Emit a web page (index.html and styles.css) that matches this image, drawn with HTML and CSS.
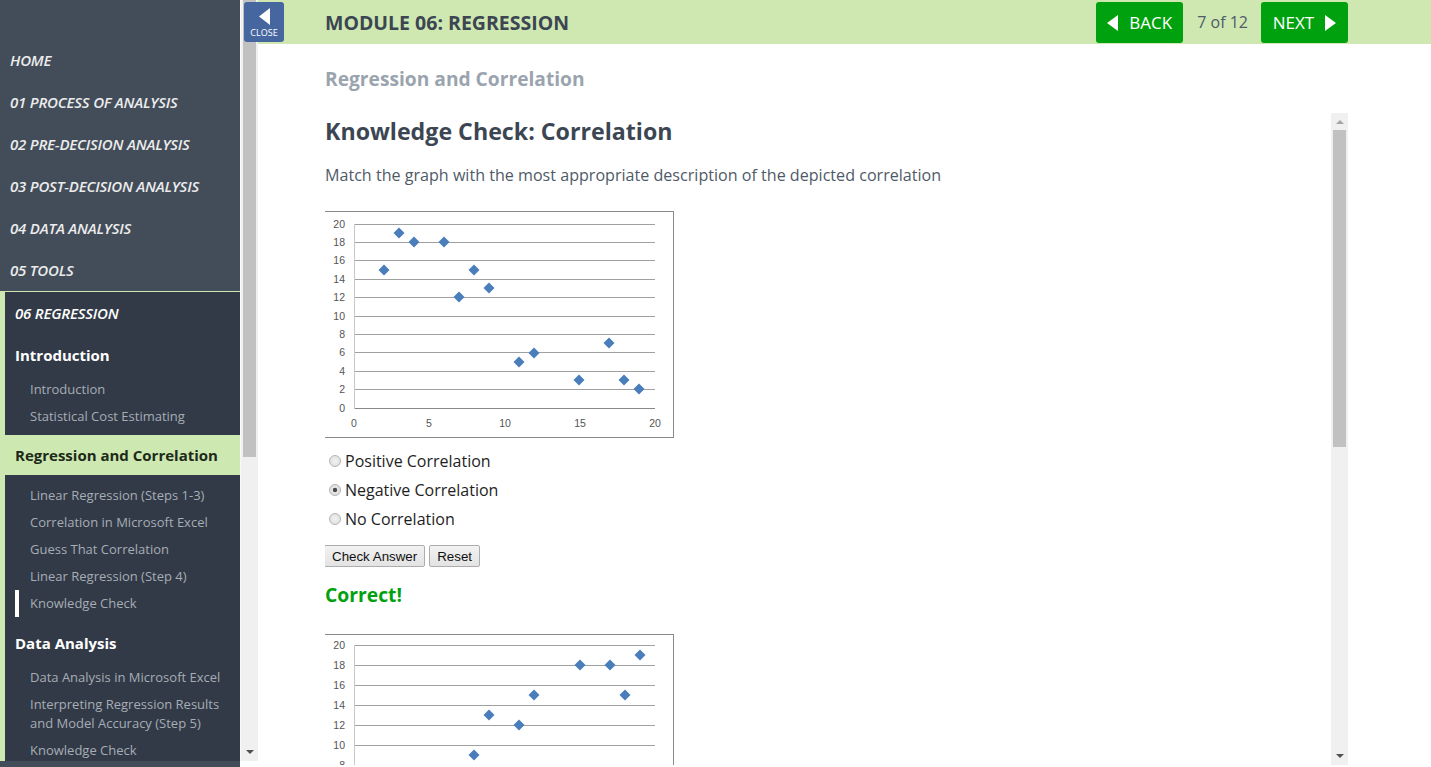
FILE: index.html
```html
<!DOCTYPE html>
<html lang="en">
<head>
<meta charset="utf-8">
<title>Module 06: Regression</title>
<link rel="stylesheet" href="styles.css">
</head>
<body>
<div class="app">
  <aside class="sidebar">
    <div class="side-scroll">
      <nav class="nav-top">
        <a class="top-item">HOME</a>
        <a class="top-item">01 PROCESS OF ANALYSIS</a>
        <a class="top-item">02 PRE-DECISION ANALYSIS</a>
        <a class="top-item">03 POST-DECISION ANALYSIS</a>
        <a class="top-item">04 DATA ANALYSIS</a>
        <a class="top-item">05 TOOLS</a>
      </nav>
      <div class="module">
        <div class="module-title">06 REGRESSION</div>
        <div class="sec-title">Introduction</div>
        <ul class="sub">
          <li>Introduction</li>
          <li>Statistical Cost Estimating</li>
        </ul>
        <div class="sec-title current">Regression and Correlation</div>
        <ul class="sub">
          <li>Linear Regression (Steps 1-3)</li>
          <li>Correlation in Microsoft Excel</li>
          <li>Guess That Correlation</li>
          <li>Linear Regression (Step 4)</li>
          <li class="active">Knowledge Check</li>
        </ul>
        <div class="sec-title">Data Analysis</div>
        <ul class="sub">
          <li>Data Analysis in Microsoft Excel</li>
          <li>Interpreting Regression Results and Model Accuracy (Step 5)</li>
          <li>Knowledge Check</li>
        </ul>
      </div>
    </div>
    <div class="side-foot"></div>
  </aside>
  <div class="side-scrollbar">
    <div class="sb-thumb"></div>
    <div class="sb-fill"></div>
    <div class="sb-arrow-down"></div>
  </div>
  <main class="main">
    <header class="topbar">
      <button class="close-btn" type="button">
        <svg width="11" height="17" viewBox="0 0 11 17"><polygon points="11,0 11,17 0,8.5" fill="#fff"/></svg>
        <span>CLOSE</span>
      </button>
      <h1 class="module-name">MODULE 06: REGRESSION</h1>
      <div class="pager">
        <button class="nav-btn" type="button">
          <svg width="11" height="16" viewBox="0 0 11 16"><polygon points="11,0 11,16 0,8" fill="#fff"/></svg>
          <span>BACK</span>
        </button>
        <span class="page-count">7 of 12</span>
        <button class="nav-btn" type="button">
          <span>NEXT</span>
          <svg width="11" height="16" viewBox="0 0 11 16"><polygon points="0,0 0,16 11,8" fill="#fff"/></svg>
        </button>
      </div>
    </header>
    <div class="content">
      <h2 class="section-name">Regression and Correlation</h2>
      <div class="frame">
        <div class="frame-body">
          <h3 class="kc-title">Knowledge Check: Correlation</h3>
          <p class="kc-text">Match the graph with the most appropriate description of the depicted correlation</p>

          <div class="chart chart-1">
            <svg width="348" height="225" viewBox="0 0 348 225">
              <defs><path id="dm" d="M0,-5.5 L5.5,0 L0,5.5 L-5.5,0Z" fill="#4a7ebb"/></defs>
              <g stroke="#a0a0a0" stroke-width="1">
                <line x1="29" y1="12.5" x2="330" y2="12.5"/>
                <line x1="29" y1="30.5" x2="330" y2="30.5"/>
                <line x1="29" y1="48.5" x2="330" y2="48.5"/>
                <line x1="29" y1="67.5" x2="330" y2="67.5"/>
                <line x1="29" y1="85.5" x2="330" y2="85.5"/>
                <line x1="29" y1="104.5" x2="330" y2="104.5"/>
                <line x1="29" y1="122.5" x2="330" y2="122.5"/>
                <line x1="29" y1="140.5" x2="330" y2="140.5"/>
                <line x1="29" y1="159.5" x2="330" y2="159.5"/>
                <line x1="29" y1="177.5" x2="330" y2="177.5"/>
                <line x1="29" y1="196.5" x2="330" y2="196.5" stroke="#888"/>
                <line x1="29.5" y1="12" x2="29.5" y2="197" stroke="#c8c8c8"/>
              </g>
              <g class="ax" text-anchor="end">
                <text x="20" y="16">20</text>
                <text x="20" y="34">18</text>
                <text x="20" y="52">16</text>
                <text x="20" y="71">14</text>
                <text x="20" y="89">12</text>
                <text x="20" y="108">10</text>
                <text x="20" y="126">8</text>
                <text x="20" y="144">6</text>
                <text x="20" y="163">4</text>
                <text x="20" y="181">2</text>
                <text x="20" y="200">0</text>
              </g>
              <g class="ax" text-anchor="middle">
                <text x="29" y="215">0</text>
                <text x="104" y="215">5</text>
                <text x="180" y="215">10</text>
                <text x="255" y="215">15</text>
                <text x="330" y="215">20</text>
              </g>
              <use href="#dm" x="59" y="58"/>
              <use href="#dm" x="74" y="21"/>
              <use href="#dm" x="89" y="30"/>
              <use href="#dm" x="119" y="30"/>
              <use href="#dm" x="134" y="85"/>
              <use href="#dm" x="149" y="58"/>
              <use href="#dm" x="164" y="76"/>
              <use href="#dm" x="194" y="150"/>
              <use href="#dm" x="209" y="141"/>
              <use href="#dm" x="254" y="168"/>
              <use href="#dm" x="284" y="131"/>
              <use href="#dm" x="299" y="168"/>
              <use href="#dm" x="314" y="177"/>
            </svg>
          </div>

          <form class="quiz">
            <label class="opt"><input type="radio" name="q1"> Positive Correlation</label>
            <label class="opt"><input type="radio" name="q1" checked> Negative Correlation</label>
            <label class="opt"><input type="radio" name="q1"> No Correlation</label>
            <div class="quiz-actions">
              <button type="button" class="sys-btn">Check Answer</button>
              <button type="button" class="sys-btn">Reset</button>
            </div>
          </form>
          <p class="feedback">Correct!</p>

          <div class="chart chart-2">
            <svg width="348" height="240" viewBox="0 0 348 240">
              <g stroke="#a0a0a0" stroke-width="1">
                <line x1="29" y1="10.5" x2="330" y2="10.5"/>
                <line x1="29" y1="30.5" x2="330" y2="30.5"/>
                <line x1="29" y1="50.5" x2="330" y2="50.5"/>
                <line x1="29" y1="70.5" x2="330" y2="70.5"/>
                <line x1="29" y1="90.5" x2="330" y2="90.5"/>
                <line x1="29" y1="110.5" x2="330" y2="110.5"/>
                <line x1="29" y1="130.5" x2="330" y2="130.5"/>
                <line x1="29" y1="150.5" x2="330" y2="150.5"/>
                <line x1="29" y1="170.5" x2="330" y2="170.5"/>
                <line x1="29" y1="190.5" x2="330" y2="190.5"/>
                <line x1="29" y1="210.5" x2="330" y2="210.5" stroke="#888"/>
                <line x1="29.5" y1="10" x2="29.5" y2="211" stroke="#c8c8c8"/>
              </g>
              <g class="ax" text-anchor="end">
                <text x="20" y="14">20</text>
                <text x="20" y="34">18</text>
                <text x="20" y="54">16</text>
                <text x="20" y="74">14</text>
                <text x="20" y="94">12</text>
                <text x="20" y="114">10</text>
                <text x="20" y="134">8</text>
                <text x="20" y="154">6</text>
                <text x="20" y="174">4</text>
                <text x="20" y="194">2</text>
                <text x="20" y="214">0</text>
              </g>
              <use href="#dm" x="149" y="120"/>
              <use href="#dm" x="164" y="80"/>
              <use href="#dm" x="194" y="90"/>
              <use href="#dm" x="209" y="60"/>
              <use href="#dm" x="255" y="30"/>
              <use href="#dm" x="285" y="30"/>
              <use href="#dm" x="300" y="60"/>
              <use href="#dm" x="315" y="20"/>
            </svg>
          </div>
        </div>
        <div class="frame-scrollbar">
          <div class="fs-arrow-up"></div>
          <div class="fs-thumb"></div>
          <div class="fs-fill"></div>
          <div class="fs-arrow-down"></div>
        </div>
      </div>
    </div>
  </main>
</div>
</body>
</html>
```

FILE: styles.css
```css
* { box-sizing: border-box; }
html, body { margin: 0; padding: 0; }
body {
  width: 1431px;
  height: 767px;
  overflow: hidden;
  font-family: "Open Sans", "Noto Sans", sans-serif;
  background: #fff;
}
.app {
  display: flex;
  height: 767px;
}

/* ---------- Sidebar ---------- */
.sidebar {
  width: 240px;
  flex: none;
  display: flex;
  flex-direction: column;
  background: #434d5a;
}
.side-scroll {
  height: 761px;
  overflow: hidden;
  display: flex;
  flex-direction: column;
}
.nav-top {
  display: flex;
  flex-direction: column;
  padding-top: 39px;
  border-bottom: 1px solid #cde8b0;
  flex: none;
}
.top-item {
  display: flex;
  align-items: center;
  height: 42px;
  padding-left: 10px;
  color: #ececec;
  font-style: italic;
  font-weight: 600;
  font-size: 15px;
  letter-spacing: -0.2px;
}
.module {
  flex: 1;
  background: #323a47;
  border-left: 5px solid #cde8b0;
}
.module-title {
  height: 42px;
  display: flex;
  align-items: center;
  padding-left: 10px;
  color: #fff;
  font-style: italic;
  font-weight: 600;
  font-size: 15px;
  letter-spacing: -0.2px;
}
.sec-title {
  height: 42px;
  display: flex;
  align-items: center;
  padding-left: 10px;
  color: #fff;
  font-weight: 700;
  font-size: 15px;
}
.sec-title.current {
  background: #cde8b0;
  color: #1d2a1a;
  height: 40px;
}
.sub {
  list-style: none;
  margin: 0;
  padding: 0 0 5px 0;
}
.sec-title.current + .sub { padding-top: 7px; padding-bottom: 5px; }
.sub li {
  position: relative;
  padding: 4px 8px 4px 25px;
  line-height: 19px;
  font-size: 13px;
  color: #a6adb6;
}
.sub li.active::before {
  content: "";
  position: absolute;
  left: 10px;
  top: 0;
  bottom: 0;
  width: 4px;
  background: #fff;
}
.side-foot { flex: 1; background: #434d5a; }

.side-scrollbar {
  width: 18px;
  flex: none;
  height: 761px;
  background: #f0f0f0;
  display: flex;
  flex-direction: column;
  align-items: center;
  border-left: 1px solid #fafafa;
}
.sb-thumb {
  width: 13px;
  height: 457px;
  background: #c1c1c1;
}
.sb-fill { flex: 1; }
.sb-arrow-down {
  width: 0; height: 0;
  border-left: 4px solid transparent;
  border-right: 4px solid transparent;
  border-top: 4px solid #505050;
  margin-bottom: 7px;
}

/* ---------- Main ---------- */
.main {
  flex: 1;
  display: flex;
  flex-direction: column;
  min-width: 0;
}
.topbar {
  position: relative;
  height: 44px;
  flex: none;
  background: #cfe8b1;
  display: flex;
  align-items: center;
  padding: 0 83px 0 67px;
}
.close-btn {
  position: absolute;
  left: -14px;
  top: 2px;
  width: 40px;
  height: 40px;
  border: 0;
  border-radius: 3px;
  background: #4666a0;
  color: #fff;
  padding: 6px 0 0;
  display: flex;
  flex-direction: column;
  align-items: center;
  font-family: "Open Sans", sans-serif;
  font-size: 9px;
  line-height: 12px;
  gap: 2px;
}
.module-name {
  margin: 0;
  font-size: 19.5px;
  font-weight: 700;
  color: #3c4653;
}
.pager {
  margin-left: auto;
  display: flex;
  align-items: center;
  gap: 14px;
}
.nav-btn {
  height: 41px;
  width: 87px;
  margin-top: 1px;
  border: 0;
  border-radius: 3px;
  background: #00a10e;
  color: #fff;
  font-family: "Open Sans", sans-serif;
  font-size: 17px;
  display: flex;
  align-items: center;
  justify-content: center;
  gap: 11px;
  padding: 0;
}
.page-count {
  font-size: 16px;
  color: #505b68;
  margin-right: -1px;
}

.content {
  flex: 1;
  display: flex;
  flex-direction: column;
  padding: 0 83px 0 67px;
  min-height: 0;
}
.section-name {
  margin: 0;
  height: 69px;
  display: flex;
  align-items: center;
  padding-bottom: 1px;
  font-size: 19.2px;
  font-weight: 700;
  color: #9aa4ae;
}
.frame {
  display: flex;
  height: 652px;
  flex: none;
}
.frame-body {
  flex: 1;
  overflow: hidden;
  padding-top: 3px;
}
.kc-title {
  margin: 0;
  font-size: 23.2px;
  line-height: 30px;
  font-weight: 700;
  color: #3c4653;
}
.kc-text {
  margin: 18px 0 0;
  font-size: 16.1px;
  line-height: 22px;
  color: #4f5a67;
}
.chart {
  width: 350px;
  border: 1px solid #8a8a8a;
  background: #fff;
  margin-left: -1px;
}
.chart svg { display: block; }
.chart .ax { font-family: "Liberation Sans", Arial, sans-serif; font-size: 10.5px; fill: #555; }
.chart-1 { margin-top: 25px; height: 227px; }
.chart-2 { margin-top: 26px; height: 242px; }

.quiz {
  margin-top: 8px;
  display: flex;
  flex-direction: column;
}
.opt {
  display: flex;
  align-items: center;
  height: 29px;
  font-size: 16px;
  color: #1e1e1e;
}
.opt input {
  -webkit-appearance: none;
  appearance: none;
  width: 12px;
  height: 12px;
  margin: 0 4px 0 4px;
  border: 1px solid #b4b4b4;
  border-radius: 50%;
  background: radial-gradient(circle at 50% 50%, #f2f2f2 0, #dcdcdc 100%);
}
.opt input:checked {
  background: radial-gradient(circle at 50% 50%, #4a4a4a 0, #4a4a4a 1.8px, #e6e6e6 2.6px, #dadada 100%);
}
.quiz-actions {
  display: flex;
  gap: 4px;
  margin-top: 12px;
  margin-left: -1px;
}
.sys-btn {
  height: 22px;
  padding: 0 7px;
  border: 1px solid #adadad;
  border-radius: 2px;
  background: linear-gradient(#f2f2f2, #e3e3e3);
  font-family: "Liberation Sans", Arial, sans-serif;
  font-size: 13.33px;
  color: #111;
}
.feedback {
  margin: 15px 0 0;
  font-size: 19.3px;
  line-height: 26px;
  font-weight: 700;
  color: #00a10e;
}

.frame-scrollbar {
  width: 17px;
  flex: none;
  background: #f0f0f0;
  display: flex;
  flex-direction: column;
  align-items: center;
}
.fs-arrow-up {
  margin-top: 7px;
  width: 0; height: 0;
  border-left: 4px solid transparent;
  border-right: 4px solid transparent;
  border-bottom: 4px solid #a3a3a3;
}
.fs-thumb {
  margin-top: 6px;
  width: 13px;
  height: 317px;
  background: #c1c1c1;
}
.fs-fill { flex: 1; }
.fs-arrow-down {
  width: 0; height: 0;
  border-left: 4px solid transparent;
  border-right: 4px solid transparent;
  border-top: 4px solid #505050;
  margin-bottom: 7px;
}
```
